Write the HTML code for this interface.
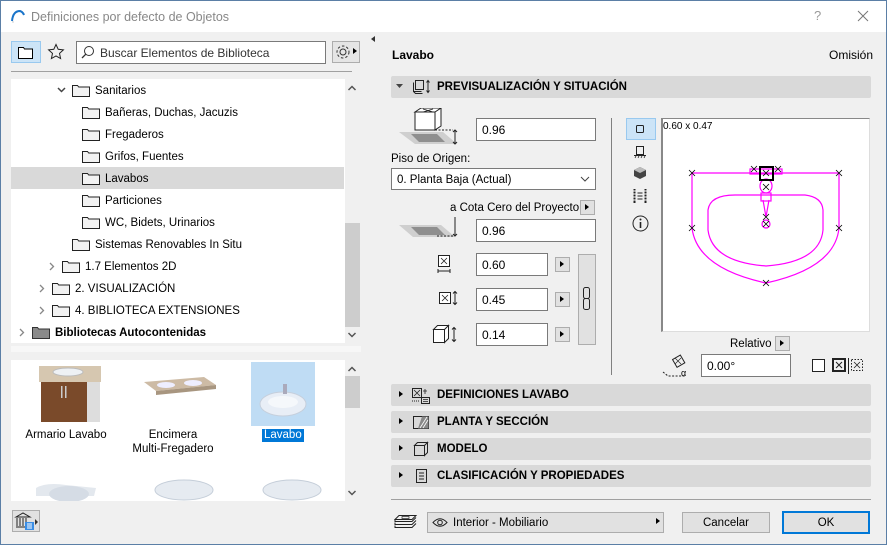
<!DOCTYPE html>
<html><head><meta charset="utf-8"><style>
*{box-sizing:border-box;margin:0;padding:0}
body{width:887px;height:545px;overflow:hidden;background:#f0f0f0;font-family:"Liberation Sans",sans-serif;font-size:12px;color:#000;position:relative}
.a{position:absolute}
.win{position:absolute;left:0;top:0;width:887px;height:545px;border:1px solid #5b7fa6;pointer-events:none}
.inp{position:absolute;background:#fff;border:1px solid #7a7a7a;padding-left:5px;line-height:22px;height:22px}
.btn{position:absolute;background:#e1e1e1;border:1px solid #adadad}
.tri{position:absolute;width:0;height:0;border-top:4px solid transparent;border-bottom:4px solid transparent;border-left:5px solid #000}
.hdr{position:absolute;left:391px;width:480px;height:22px;background:#d9d9d9;border-radius:2px;font-weight:bold;font-size:11.5px;line-height:23px}
.hdr .t{position:absolute;left:46px}
.tr{position:absolute;left:11px;width:334px;height:22px;line-height:24px;font-size:11.5px}
</style></head><body>
<!-- title -->
<div class="a" style="left:0;top:0;width:887px;height:32px;background:#fff"></div>
<svg class="a" style="left:10px;top:9px" width="16" height="14"><path d="M2 12 Q3 2 10 2 Q13 3 14 6" fill="none" stroke="#1a74c9" stroke-width="2"/><path d="M2 13h2" stroke="#ccc"/></svg>
<div class="a" style="left:31px;top:10px;color:#888;font-size:12.5px">Definiciones por defecto de Objetos</div>
<div class="a" style="left:814px;top:8px;color:#999;font-size:13px">?</div>
<svg class="a" style="left:857px;top:10px" width="12" height="12"><path d="M1 1L11 11M11 1L1 11" stroke="#777" stroke-width="1"/></svg>

<!-- left toolbar -->
<div class="a" style="left:11px;top:41px;width:30px;height:22px;background:#cce4f7;border:1px solid #99c9ef"></div>
<svg class="a" style="left:18px;top:45px" width="16" height="14"><path d="M0.5 2.5h5l1 1.5h8v9.5h-14z" fill="#fff" stroke="#000"/></svg>
<svg class="a" style="left:47px;top:43px" width="18" height="18"><path d="M9 1.5l2.2 4.8 5.2.6-3.9 3.5 1.1 5.1L9 12.9l-4.6 2.6 1.1-5.1L1.6 6.9l5.2-.6z" fill="none" stroke="#222"/></svg>
<div class="inp" style="left:76px;top:41px;width:250px;height:23px;border-color:#7a7a7a;padding-left:23px;color:#333;font-size:12px;line-height:23px">Buscar Elementos de Biblioteca</div>
<svg class="a" style="left:81px;top:45px" width="14" height="14"><circle cx="8" cy="6" r="4.5" fill="none" stroke="#333"/><path d="M4.8 9.2L1 13" stroke="#333" stroke-width="1.3"/></svg>
<div class="btn" style="left:332px;top:41px;width:28px;height:22px;background:#e5e5e5"></div>
<svg class="a" style="left:334px;top:43px" width="18" height="18"><circle cx="9" cy="9" r="3" fill="none" stroke="#333"/><circle cx="9" cy="9" r="6" fill="none" stroke="#333" stroke-dasharray="2.5 2"/></svg>
<div class="tri" style="left:353px;top:48px;border-top-width:3.5px;border-bottom-width:3.5px;border-left-width:4px"></div>
<div class="a" style="left:11px;top:71px;width:341px;height:1px;background:#a0a0a0"></div>

<!-- tree -->
<div class="a" style="left:11px;top:79px;width:334px;height:264px;background:#fff"></div>
<div class="a" style="left:345px;top:79px;width:15px;height:264px;background:#f0f0f0"></div>
<div class="a" style="left:345px;top:223px;width:15px;height:104px;background:#cdcdcd"></div>
<svg class="a" style="left:347px;top:84px" width="10" height="8"><path d="M1.5 6l3.5-3.5 3.5 3.5" fill="none" stroke="#555" stroke-width="1.5"/></svg>
<svg class="a" style="left:347px;top:331px" width="10" height="8"><path d="M1.5 2l3.5 3.5 3.5-3.5" fill="none" stroke="#555" stroke-width="1.5"/></svg>
<div class="a" style="left:11px;top:167px;width:333px;height:22px;background:#d9d9d9"></div>

<svg class="a" style="left:0;top:80px" width="345" height="264">
<defs><g id="f"><path d="M0.5 2.5h5l1.2 1.5h10.8v9.5h-17z" fill="#f2f2f2" stroke="#222"/></g></defs>
<path d="M58 8l3.5 3.5 3.5-3.5" fill="none" stroke="#444" stroke-width="1.5"/>
<use href="#f" x="72" y="3"/>
<use href="#f" x="82" y="25"/><use href="#f" x="82" y="47"/><use href="#f" x="82" y="69"/><use href="#f" x="82" y="91"/><use href="#f" x="82" y="113"/><use href="#f" x="82" y="135"/>
<use href="#f" x="72" y="157"/>
<path d="M50 183l3.5 3.5-3.5 3.5" fill="none" stroke="#888" stroke-width="1.3"/><use href="#f" x="62" y="179"/>
<path d="M40 205l3.5 3.5-3.5 3.5" fill="none" stroke="#888" stroke-width="1.3"/><use href="#f" x="52" y="201"/>
<path d="M40 227l3.5 3.5-3.5 3.5" fill="none" stroke="#888" stroke-width="1.3"/><use href="#f" x="52" y="223"/>
<path d="M20 249l3.5 3.5-3.5 3.5" fill="none" stroke="#888" stroke-width="1.3"/><path d="M32.5 247.5h5l1.2 1.5h10.8v9.5h-17z" fill="#8a8a8a" stroke="#333"/>
</svg>
<div class="tr" style="top:79px;left:95px">Sanitarios</div>
<div class="tr" style="top:101px;left:105px">Bañeras, Duchas, Jacuzis</div>
<div class="tr" style="top:123px;left:105px">Fregaderos</div>
<div class="tr" style="top:145px;left:105px">Grifos, Fuentes</div>
<div class="tr" style="top:167px;left:105px">Lavabos</div>
<div class="tr" style="top:189px;left:105px">Particiones</div>
<div class="tr" style="top:211px;left:105px">WC, Bidets, Urinarios</div>
<div class="tr" style="top:233px;left:95px">Sistemas Renovables In Situ</div>
<div class="tr" style="top:255px;left:85px">1.7 Elementos 2D</div>
<div class="tr" style="top:277px;left:75px">2. VISUALIZACIÓN</div>
<div class="tr" style="top:299px;left:75px">4. BIBLIOTECA EXTENSIONES</div>
<div class="tr" style="top:321px;left:55px;font-weight:bold">Bibliotecas Autocontenidas</div>

<div class="a" style="left:11px;top:346px;width:350px;height:6px;background:#f7f7f7"></div>

<!-- grid -->
<div class="a" style="left:11px;top:360px;width:334px;height:141px;background:#fff"></div>
<div class="a" style="left:345px;top:360px;width:15px;height:141px;background:#f0f0f0"></div>
<div class="a" style="left:345px;top:376px;width:15px;height:32px;background:#cdcdcd"></div>
<svg class="a" style="left:347px;top:365px" width="10" height="8"><path d="M1.5 6l3.5-3.5 3.5 3.5" fill="none" stroke="#555" stroke-width="1.5"/></svg>
<svg class="a" style="left:347px;top:489px" width="10" height="8"><path d="M1.5 2l3.5 3.5 3.5-3.5" fill="none" stroke="#555" stroke-width="1.5"/></svg>
<div class="a" style="left:251px;top:362px;width:64px;height:64px;background:#bfdcf4"></div>
<svg class="a" style="left:11px;top:360px" width="334" height="141">
<path d="M28 6h62v16H28z" fill="#d6c7b0"/><ellipse cx="57" cy="12" rx="15" ry="4" fill="#eef1f4" stroke="#bbb"/>
<rect x="30" y="22" width="46" height="40" fill="#7a4a2a"/><rect x="76" y="22" width="13" height="40" fill="#ddd"/>
<rect x="50" y="26" width="1.5" height="12" fill="#ccc"/><rect x="54" y="26" width="1.5" height="12" fill="#ccc"/>
<path d="M133 22l60-5 12 8-60 6z" fill="#cdbba5"/><path d="M145 31l60-6v4l-60 6z" fill="#a89680"/>
<ellipse cx="155" cy="25" rx="9" ry="3" fill="#eef"/><ellipse cx="182" cy="23" rx="9" ry="3" fill="#eef"/>
<ellipse cx="272" cy="44" rx="23" ry="12" fill="#e8eef6" stroke="#c5cfdc"/><ellipse cx="272" cy="42" rx="15" ry="6" fill="#f5f8fb"/><rect x="272" y="24" width="4" height="10" fill="#aab"/>
<path d="M25 128q10-6 30-3l30 3 -2 8h-58z" fill="#e3e8ee"/><ellipse cx="58" cy="134" rx="20" ry="8" fill="#d5dce5"/>
<ellipse cx="173" cy="130" rx="29" ry="10" fill="#e6ebf1" stroke="#c5ced9"/><ellipse cx="281" cy="130" rx="29" ry="10" fill="#e6ebf1" stroke="#c5ced9"/>
</svg>
<div class="a" style="left:11px;top:429px;width:110px;text-align:center;font-size:11.5px">Armario Lavabo</div>
<div class="a" style="left:118px;top:429px;width:110px;text-align:center;font-size:11.5px;line-height:13.5px">Encimera<br>Multi-Fregadero</div>
<div class="a" style="left:262px;top:429px;background:#0078d7;color:#fff;font-size:11.5px;padding:0 2px;line-height:13px">Lavabo</div>
<div class="btn" style="left:12px;top:510px;width:28px;height:22px"></div>
<svg class="a" style="left:14px;top:511px" width="26" height="20"><path d="M2 6l7-4 7 4zM3 7v8M6 7v8M9 7v8M12 7v8M2 16h14" fill="none" stroke="#222"/><rect x="11" y="11" width="9" height="8" fill="#3a8ee6"/><path d="M13 13h5M13 15h5M13 17h5" stroke="#fff"/><path d="M21 8l3 3-3 3z" fill="#333"/></svg>

<div class="tri" style="left:371px;top:36px;border-left:none;border-right:4px solid #333;border-top-width:3.5px;border-bottom-width:3.5px"></div>

<!-- right -->
<div class="a" style="left:392px;top:48px;font-weight:bold;font-size:12px">Lavabo</div>
<div class="a" style="left:829px;top:48px;font-size:12px">Omisión</div>

<div class="hdr" style="top:76px"><svg class="a" style="left:5px;top:8px" width="8" height="6"><path d="M0 0h7l-3.5 4z" fill="#444"/></svg>
<svg class="a" style="left:21px;top:3px" width="20" height="16"><rect x="3.5" y="1.5" width="8" height="9" fill="none" stroke="#222"/><path d="M1.5 3.5v9h8M1.5 12.5l2 2h7" fill="none" stroke="#222"/><path d="M16 2v11M14.5 3.5l1.5-2 1.5 2M14.5 11.5l1.5 2 1.5-2" fill="none" stroke="#222"/></svg><span class="t">PREVISUALIZACIÓN Y SITUACIÓN</span></div>

<svg class="a" style="left:397px;top:108px" width="70" height="42"><path d="M2 24h44l14 12H18z" fill="#cfcfcf"/><path d="M14 26h26l8 8H22z" fill="#8f8f8f"/><path d="M18 4l6-4h20l-6 4zM18 4h20v18H18zM38 4l6-4v18l-6 4z" fill="#fff" stroke="#222"/><path d="M26 1l10 3M36 1l-10 3" stroke="#222" stroke-width=".8"/><path d="M38 22h18" stroke="#222" stroke-dasharray="2 1.5"/><path d="M58 22v14M56 24l2-2 2 2M56 34l2 2 2-2" fill="none" stroke="#222"/></svg>
<div class="inp" style="left:476px;top:118px;width:120px;height:23px">0.96</div>
<div class="a" style="left:391px;top:153px;font-size:11.5px">Piso de Origen:</div>
<div class="inp" style="left:391px;top:168px;width:205px;height:22px;font-size:11.5px">0. Planta Baja (Actual)</div>
<svg class="a" style="left:580px;top:176px" width="10" height="6"><path d="M1 1l4 4 4-4" fill="none" stroke="#444"/></svg>
<div class="a" style="left:450px;top:202px;font-size:11.5px">a Cota Cero del Proyecto</div>
<div class="btn" style="left:580px;top:200px;width:15px;height:15px"></div><div class="tri" style="left:585px;top:204px;border-left-width:4px;border-top-width:3.5px;border-bottom-width:3.5px"></div>
<svg class="a" style="left:397px;top:215px" width="70" height="30"><path d="M2 10h42l14 12H16z" fill="#cfcfcf"/><path d="M14 12h26l8 8H22z" fill="#8f8f8f"/><path d="M40 21h16" stroke="#222" stroke-dasharray="2 1.5"/><path d="M58 2v19M56 19l2 2 2-2" fill="none" stroke="#222"/></svg>
<div class="inp" style="left:476px;top:219px;width:120px;height:23px">0.96</div>

<svg class="a" style="left:436px;top:254px" width="20" height="24"><rect x="2.5" y="1.5" width="11" height="11" fill="#fff" stroke="#222"/><path d="M5 4l6 6M11 4l-6 6" stroke="#222" stroke-width=".8"/><path d="M2 15v4M14 15v4M2 17h12" stroke="#222"/></svg>
<div class="inp" style="left:476px;top:253px;width:72px;height:23px">0.60</div>
<div class="btn" style="left:555px;top:257px;width:15px;height:15px"></div><div class="tri" style="left:560px;top:261px;border-left-width:4px;border-top-width:3.5px;border-bottom-width:3.5px"></div>
<svg class="a" style="left:438px;top:290px" width="22" height="16"><rect x="1.5" y="2.5" width="11" height="11" fill="#fff" stroke="#222"/><path d="M4 5l6 6M10 5l-6 6" stroke="#222" stroke-width=".8"/><path d="M17 2v12M15 3.5l2-2 2 2M15 12.5l2 2 2-2" fill="none" stroke="#222"/></svg>
<div class="inp" style="left:476px;top:288px;width:72px;height:23px">0.45</div>
<div class="btn" style="left:555px;top:292px;width:15px;height:15px"></div><div class="tri" style="left:560px;top:296px;border-left-width:4px;border-top-width:3.5px;border-bottom-width:3.5px"></div>
<svg class="a" style="left:432px;top:324px" width="28" height="20"><path d="M1.5 5.5l4-4h11l-4 4zM1.5 5.5h11v13h-11zM12.5 5.5l4-4v13l-4 4z" fill="#fff" stroke="#222"/><path d="M22 4v13M20 5.5l2-2 2 2M20 15.5l2 2 2-2" fill="none" stroke="#222"/></svg>
<div class="inp" style="left:476px;top:323px;width:72px;height:23px">0.14</div>
<div class="btn" style="left:555px;top:327px;width:15px;height:15px"></div><div class="tri" style="left:560px;top:331px;border-left-width:4px;border-top-width:3.5px;border-bottom-width:3.5px"></div>
<div class="btn" style="left:578px;top:254px;width:18px;height:91px;background:#e1e1e1"></div>
<svg class="a" style="left:581px;top:286px" width="12" height="26"><rect x="2.5" y="1.5" width="6" height="11" rx="2" fill="none" stroke="#222"/><rect x="2.5" y="12.5" width="6" height="11" rx="2" fill="none" stroke="#222"/></svg>

<div class="a" style="left:611px;top:118px;width:1px;height:257px;background:#808080"></div>

<div class="a" style="left:626px;top:118px;width:30px;height:22px;background:#cce4f7;border:1px solid #99c9ef"></div>
<svg class="a" style="left:634px;top:123px" width="12" height="12"><rect x="2.5" y="2.5" width="7" height="7" rx="1" fill="none" stroke="#222"/></svg>
<svg class="a" style="left:633px;top:145px" width="14" height="14"><path d="M3.5 1.5h7v8h-7z M1 10.5h12" fill="none" stroke="#222"/><path d="M2 13l1-2M5 13l1-2M8 13l1-2M11 13l1-2" stroke="#222" stroke-width=".8"/></svg>
<svg class="a" style="left:633px;top:166px" width="14" height="14"><path d="M7 1l6 3v6l-6 3-6-3V4z" fill="#444"/><path d="M7 1l6 3-6 3-6-3z" fill="#bbb"/></svg>
<svg class="a" style="left:632px;top:188px" width="16" height="16"><path d="M2.5 1v14M13.5 1v14" stroke="#222" stroke-width="2"/><path d="M1 3h3M1 6h3M1 9h3M1 12h3M12 3h3M12 6h3M12 9h3M12 12h3" stroke="#fff"/><path d="M5.5 5h5M5.5 8h5M5.5 11h5" stroke="#222"/></svg>
<svg class="a" style="left:632px;top:215px" width="17" height="17"><circle cx="8.5" cy="8.5" r="7.5" fill="none" stroke="#222"/><path d="M8.5 7v6" stroke="#222" stroke-width="1.6"/><circle cx="8.5" cy="4.5" r="1" fill="#222"/></svg>

<div class="a" style="left:661px;top:118px;width:209px;height:214px;background:#fff;border-top:1px solid #888;border-left:2px solid #888;border-right:1px solid #ddd;border-bottom:1px solid #ddd"></div>
<div class="a" style="left:663px;top:121px;font-size:10px">0.60 x 0.47</div>
<svg class="a" style="left:0;top:0" width="887" height="545">
<g fill="none" stroke="#ff00ff" stroke-width="1.2">
<path d="M692 173H839V228Q835 268 766 283Q697 268 692 228Z"/>
<path d="M708 210Q710 195 735 195H805Q822 197 823 210V230Q820 262 766 266Q712 262 708 230Z"/>
<rect x="750" y="169" width="32" height="5"/>
<ellipse cx="766" cy="186" rx="6" ry="7"/>
<rect x="761" y="193" width="10" height="8"/>
<path d="M763 200L766 217 769 200"/>
<circle cx="766" cy="224" r="4"/>
</g>
<rect x="760" y="167" width="13" height="13" fill="none" stroke="#000" stroke-width="2"/>
<g stroke="#000" stroke-width=".8">
<path d="M689 170l6 6M695 170l-6 6M836 170l6 6M842 170l-6 6M689 225l6 6M695 225l-6 6M836 225l6 6M842 225l-6 6M763 280l6 6M769 280l-6 6M751 166l6 6M757 166l-6 6M775 166l6 6M781 166l-6 6M763 170l6 6M769 170l-6 6M763 184l6 6M769 184l-6 6M763 214l6 6M769 214l-6 6M763 221l6 6M769 221l-6 6"/>
</g>
</svg>
<div class="a" style="left:730px;top:338px;font-size:11.5px">Relativo</div>
<div class="btn" style="left:775px;top:336px;width:15px;height:15px"></div><div class="tri" style="left:780px;top:340px;border-left-width:4px;border-top-width:3.5px;border-bottom-width:3.5px"></div>
<svg class="a" style="left:662px;top:354px" width="30" height="24"><rect x="12" y="3" width="9" height="9" transform="rotate(-30 16 7)" fill="none" stroke="#222"/><path d="M13 4l6 6M19 4l-6 6" stroke="#222" stroke-width=".7"/><path d="M1 18l5 4h18" fill="none" stroke="#222" stroke-dasharray="2 1.5"/><text x="19" y="22" font-size="9" font-family="Liberation Sans">α</text></svg>
<div class="inp" style="left:701px;top:354px;width:90px;height:23px">0.00°</div>
<div class="a" style="left:812px;top:359px;width:13px;height:13px;border:1px solid #222;background:#fff"></div>
<svg class="a" style="left:832px;top:358px" width="34" height="16"><rect x="1" y="1" width="12" height="12" fill="none" stroke="#222" stroke-width="2"/><path d="M4 4l6 6M10 4l-6 6" stroke="#222"/><path d="M16.5 0v16" stroke="#222"/><rect x="19.5" y="1.5" width="11" height="11" fill="none" stroke="#222" stroke-dasharray="1.5 1.5"/><path d="M22 4l6 6M28 4l-6 6" stroke="#222" stroke-width=".8"/></svg>

<div class="hdr" style="top:384px"><div class="tri" style="left:8px;top:7px;border-left-width:4px;border-top-width:3.5px;border-bottom-width:3.5px"></div>
<svg class="a" style="left:20px;top:3px" width="20" height="17"><rect x="1.5" y="1.5" width="9" height="9" fill="none" stroke="#222"/><path d="M3 3l6 6M9 3l-6 6" stroke="#222" stroke-width=".8"/><path d="M14 2v5M12 4h4" stroke="#222" stroke-width=".8"/><rect x="10.5" y="10.5" width="8" height="6" fill="none" stroke="#222"/><path d="M12 12.5h5M12 14.5h5" stroke="#222" stroke-width=".8"/><path d="M1 14h7" stroke="#222" stroke-dasharray="1 1"/></svg><span class="t">DEFINICIONES LAVABO</span></div>
<div class="hdr" style="top:411px"><div class="tri" style="left:8px;top:7px;border-left-width:4px;border-top-width:3.5px;border-bottom-width:3.5px"></div>
<svg class="a" style="left:21px;top:4px" width="18" height="15"><rect x="1.5" y="1.5" width="15" height="12" fill="none" stroke="#222"/><path d="M10 1.5h6.5v12H6z" fill="#888"/><path d="M8 13l7-11M11 13l5-8" stroke="#fff" stroke-width=".8"/></svg><span class="t">PLANTA Y SECCIÓN</span></div>
<div class="hdr" style="top:438px"><div class="tri" style="left:8px;top:7px;border-left-width:4px;border-top-width:3.5px;border-bottom-width:3.5px"></div>
<svg class="a" style="left:22px;top:3px" width="16" height="16"><path d="M1.5 4.5l3-3h10l-3 3zM1.5 4.5h10v10h-10zM11.5 4.5l3-3v10l-3 3z" fill="none" stroke="#222"/></svg><span class="t">MODELO</span></div>
<div class="hdr" style="top:465px"><div class="tri" style="left:8px;top:7px;border-left-width:4px;border-top-width:3.5px;border-bottom-width:3.5px"></div>
<svg class="a" style="left:24px;top:3px" width="14" height="16"><rect x="1.5" y="1.5" width="10" height="13" fill="none" stroke="#222"/><path d="M4 5h5M4 8h5M4 11h5" stroke="#222"/></svg><span class="t">CLASIFICACIÓN Y PROPIEDADES</span></div>

<div class="a" style="left:391px;top:499px;width:480px;height:1px;background:#a0a0a0"></div>

<svg class="a" style="left:394px;top:513px" width="24" height="18"><path d="M5 2.5h17l-4 4H1zM1 6.5v2h17l4-4M1 9.5v2h17l4-4M1 12.5v2h17l4-4" fill="none" stroke="#222"/><rect x="8" y="3.5" width="7" height="2" fill="none" stroke="#222" stroke-width=".7"/></svg>
<div class="btn" style="left:427px;top:512px;width:237px;height:21px"></div>
<svg class="a" style="left:432px;top:517px" width="16" height="11"><path d="M1 5.5Q8 -2 15 5.5Q8 13 1 5.5z" fill="none" stroke="#222"/><circle cx="8" cy="5.5" r="2.3" fill="none" stroke="#222"/></svg>
<div class="a" style="left:453px;top:517px;font-size:11.5px">Interior - Mobiliario</div>
<div class="tri" style="left:656px;top:518px;border-left-width:4px;border-top-width:3.5px;border-bottom-width:3.5px"></div>
<div class="btn" style="left:682px;top:512px;width:88px;height:21px;text-align:center;line-height:21px;font-size:11.5px">Cancelar</div>
<div class="btn" style="left:782px;top:511px;width:88px;height:23px;border:2px solid #0078d7;text-align:center;line-height:20px;font-size:11.5px">OK</div>

<div class="win"></div>
</body></html>
